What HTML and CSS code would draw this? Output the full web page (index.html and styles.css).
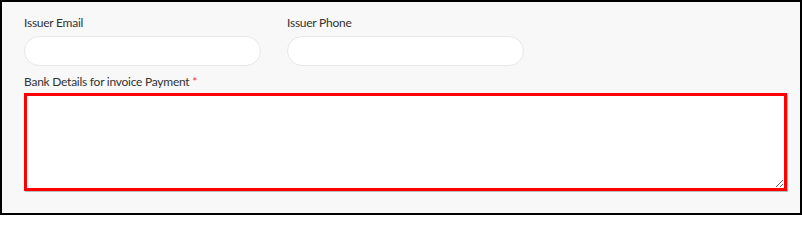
FILE: index.html
```html
<!DOCTYPE html>
<html>
<head>
<meta charset="utf-8">
<link rel="stylesheet" href="styles.css">
</head>
<body>
<div class="panel">
  <div class="grid">
    <div class="field">
      <label class="label">Issuer Email</label>
      <input class="input" type="text">
    </div>
    <div class="field">
      <label class="label">Issuer Phone</label>
      <input class="input" type="text">
    </div>
    <div class="field"></div>
    <div class="field full">
      <label class="label label-tight">Bank Details for invoice Payment <span class="req">*</span></label>
      <textarea class="textarea"></textarea>
    </div>
  </div>
</div>
</body>
</html>
```
FILE: styles.css
```css
html, body {
  margin: 0;
  padding: 0;
}
body {
  font-family: "Lato", "Open Sans", sans-serif;
}
.panel {
  box-sizing: border-box;
  width: 802px;
  height: 215px;
  border: 2px solid #000;
  background: #f8f8f8;
  padding: 13px 13px 0 22px;
}
.grid {
  display: grid;
  grid-template-columns: repeat(3, 1fr);
  column-gap: 26px;
  row-gap: 8px;
}
.field {
  display: flex;
  flex-direction: column;
}
.full {
  grid-column: 1 / -1;
}
.label {
  font-size: 12px;
  line-height: 16px;
  letter-spacing: -0.25px;
  color: #333;
  margin-bottom: 5px;
}
.label-tight {
  margin-bottom: 3px;
}
.req {
  color: #e53935;
}
.input {
  box-sizing: border-box;
  height: 30px;
  border: 1px solid #e8e8e8;
  border-radius: 15px;
  background: #fff;
  outline: none;
  margin: 0;
}
.textarea {
  box-sizing: border-box;
  height: 98px;
  border: 3px solid #ff0000;
  background: #fff;
  box-shadow: 1px 1px 0 #bbb;
  outline: none;
  resize: vertical;
  margin: 0;
  font-family: inherit;
}
```
